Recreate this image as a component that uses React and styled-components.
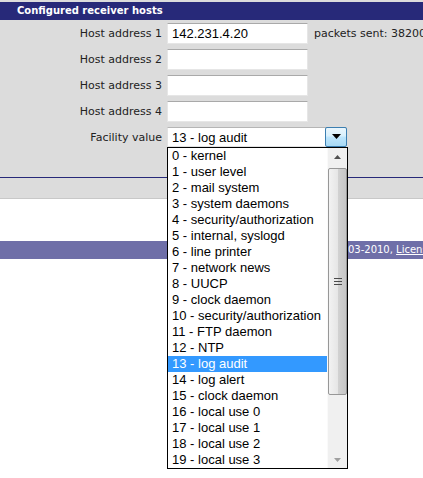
import React from 'react'
import styled, { createGlobalStyle } from 'styled-components'

const GlobalStyle = createGlobalStyle`
  html, body {
    margin: 0;
    padding: 0;
    background: #ffffff;
    overflow: hidden;
  }
  body {
    font-family: "DejaVu Sans", Verdana, sans-serif;
  }
`

const facilities = [
  'kernel', 'user level', 'mail system', 'system daemons',
  'security/authorization', 'internal, syslogd', 'line printer',
  'network news', 'UUCP', 'clock daemon', 'security/authorization',
  'FTP daemon', 'NTP', 'log audit', 'log alert', 'clock daemon',
  'local use 0', 'local use 1', 'local use 2', 'local use 3',
]

const Page = styled.div`
  width: 423px;
  height: 478px;
  overflow: hidden;
  position: relative;
`

const Panel = styled.div`
  background: #dcdcdc;
  padding: 2px 0 30px;
`

const SectionTitle = styled.div`
  height: 18px;
  background: #272979;
  color: #ffffff;
  font-weight: bold;
  font-size: 10px;
  line-height: 18px;
  padding-left: 17px;
  white-space: nowrap;
`

const Form = styled.div`
  display: grid;
  grid-template-columns: 162px max-content max-content;
  column-gap: 5px;
  row-gap: 5px;
  padding-top: 3px;
  align-items: center;
`

const Label = styled.div`
  text-align: right;
  font-size: 11px;
  color: #222;
  white-space: nowrap;
`

const Field = styled.div`
  box-sizing: border-box;
  width: 141px;
  height: 21px;
  background: #fff;
  border: 1px solid #e6e6e6;
  border-top-color: #a9a9a9;
  font-family: "Liberation Sans", Arial, sans-serif;
  font-size: 13px;
  line-height: 19px;
  padding-left: 4px;
  color: #000;
`

const Note = styled.div`
  font-size: 11px;
  color: #222;
  white-space: nowrap;
  padding-left: 1px;
`

const SelectWrap = styled.div`
  position: relative;
  grid-column: 2 / span 2;
  width: 180px;
  height: 20px;
`

const SelectBox = styled.div`
  box-sizing: border-box;
  height: 20px;
  background: #fff;
  border: 1px solid #e2e2e2;
  border-top-color: #b5b5b5;
  display: flex;
  align-items: center;
  justify-content: space-between;
  font-family: "Liberation Sans", Arial, sans-serif;
  font-size: 13px;
  padding-left: 4px;
`

const DropButton = styled.div`
  box-sizing: border-box;
  width: 22px;
  height: 20px;
  margin-right: -1px;
  margin-top: -1px;
  border: 1px solid #3c7fb1;
  border-radius: 2px;
  background: linear-gradient(#eaf6fd, #d9f0fc 45%, #bee6fd 50%, #a7d9f5);
  display: flex;
  align-items: center;
  justify-content: center;
`

const ListBox = styled.div`
  position: absolute;
  top: 20px;
  left: 0;
  width: 181px;
  height: 322px;
  box-sizing: border-box;
  border: 1px solid #000;
  background: #fff;
  display: flex;
  z-index: 5;
`

const Items = styled.div`
  flex: 1;
  overflow: hidden;
`

const Item = styled.div`
  height: 16px;
  line-height: 16px;
  padding-left: 4px;
  font-family: "Liberation Sans", Arial, sans-serif;
  font-size: 13px;
  white-space: nowrap;
  color: ${(p) => (p.$active ? '#fff' : '#000')};
  background: ${(p) => (p.$active ? '#3399ff' : 'transparent')};
`

const Scrollbar = styled.div`
  width: 19px;
  background: #f0f0f0;
  display: flex;
  flex-direction: column;
  border-left: 1px solid #fafafa;
`

const Arrow = styled.div`
  height: 17px;
  display: flex;
  align-items: center;
  justify-content: center;
`

const Track = styled.div`
  flex: 1;
  padding-top: 3px;
  position: relative;
`

const Thumb = styled.div`
  box-sizing: border-box;
  height: 227px;
  margin: 0 0 0 0;
  border: 1px solid #979797;
  border-radius: 2px;
  background: linear-gradient(90deg, #f2f2f2, #e6e6e6 50%, #d2d2d2 51%, #c6c6c6);
  display: flex;
  align-items: center;
  justify-content: center;
`

const Rule = styled.div`
  height: 1px;
  background: #272979;
`

const Strip = styled.div`
  height: 20px;
  background: #dcdcdc;
  border-bottom: 1px solid #c8c8c8;
`

const Spacer = styled.div`
  height: 42px;
`

const Footer = styled.div`
  height: 18px;
  background: #6f6fa8;
  color: #fff;
  font-size: 10px;
  line-height: 18px;
  padding-left: 270px;
  white-space: nowrap;
  a {
    color: #fff;
    text-decoration: underline;
  }
`

const Triangle = ({ dir = 'down', color = '#000', w = 8, h = 4 }) => (
  <svg width={w} height={h} viewBox={`0 0 ${w} ${h}`}>
    {dir === 'down'
      ? <polygon points={`0,0 ${w},0 ${w / 2},${h}`} fill={color} />
      : <polygon points={`0,${h} ${w},${h} ${w / 2},0`} fill={color} />}
  </svg>
)

const Grip = () => (
  <svg width="8" height="7" viewBox="0 0 8 7">
    <rect x="0" y="0" width="8" height="1" fill="#4a4a4a" />
    <rect x="0" y="3" width="8" height="1" fill="#4a4a4a" />
    <rect x="0" y="6" width="8" height="1" fill="#4a4a4a" />
  </svg>
)

export default function App() {
  return (
    <Page>
      <GlobalStyle />
      <Panel>
        <SectionTitle>Configured receiver hosts</SectionTitle>
        <Form>
          <Label>Host address 1</Label>
          <Field>142.231.4.20</Field>
          <Note>packets sent: 38200</Note>
          <Label>Host address 2</Label>
          <Field />
          <span />
          <Label>Host address 3</Label>
          <Field />
          <span />
          <Label>Host address 4</Label>
          <Field />
          <span />
          <Label>Facility value</Label>
          <SelectWrap>
            <SelectBox>
              13 - log audit
              <DropButton><Triangle w={9} h={5} /></DropButton>
            </SelectBox>
            <ListBox>
              <Items>
                {facilities.map((f, i) => (
                  <Item key={i} $active={i === 13}>{i} - {f}</Item>
                ))}
              </Items>
              <Scrollbar>
                <Arrow><Triangle dir="up" color="#505050" w={7} h={4} /></Arrow>
                <Track>
                  <Thumb><Grip /></Thumb>
                </Track>
                <Arrow><Triangle color="#a0a0a0" w={7} h={4} /></Arrow>
              </Scrollbar>
            </ListBox>
          </SelectWrap>
        </Form>
      </Panel>
      <Rule />
      <Strip />
      <Spacer />
      <Footer>Copyright © 2003-2010, <a>License</a></Footer>
    </Page>
  )
}
